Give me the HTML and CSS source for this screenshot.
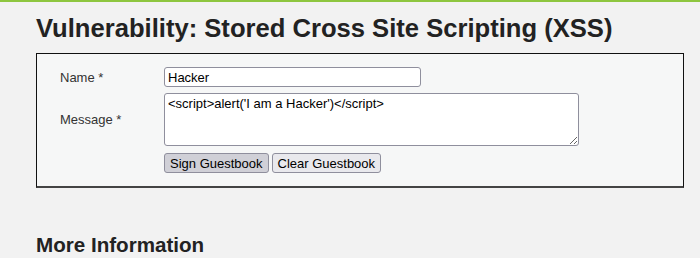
FILE: index.html
```html
<!DOCTYPE html>
<html>
<head>
  <title>Stored XSS</title>
  <link rel="stylesheet" href="styles.css">
</head>
<body>
  <div class="main">
    <h1>Vulnerability: Stored Cross Site Scripting (XSS)</h1>

    <div class="vulnerable-area">
      <form class="guestbook">
        <label for="txtName">Name *</label>
        <input type="text" id="txtName" value="Hacker">

        <label for="mtxMessage">Message *</label>
        <textarea id="mtxMessage">&lt;script&gt;alert('I am a Hacker')&lt;/script&gt;</textarea>

        <span></span>
        <div class="buttons">
          <button type="button" class="active">Sign Guestbook</button>
          <button type="button">Clear Guestbook</button>
        </div>
      </form>
    </div>

    <h2>More Information</h2>
  </div>
</body>
</html>
```

FILE: styles.css
```css
body {
  font-family: "Liberation Sans", Arial, sans-serif;
  background-color: #f2f2f2;
  color: #222;
  margin: 0;
  border-top: 2px solid #8ec63f;
}

.main {
  padding: 0 16px 0 36px;
}

h1 {
  font-size: 25.6px;
  font-weight: bold;
  line-height: 30px;
  margin: 11px 0 10px;
  color: #222;
}

h2 {
  font-size: 20.6px;
  font-weight: bold;
  line-height: 23px;
  margin: 45px 0 0;
  color: #222;
}

.vulnerable-area {
  background-color: #f6f7f7;
  border: 1px solid #111;
  border-bottom: 2px solid #444;
  padding: 13px 23px 13px;
}

.guestbook {
  display: grid;
  grid-template-columns: 104px auto;
  row-gap: 6px;
  align-items: center;
  justify-items: start;
  font-size: 13px;
  color: #333;
}

input[type="text"],
textarea {
  font-family: "Liberation Sans", Arial, sans-serif;
  font-size: 13px;
  color: #000;
  background-color: #fff;
  border: 1px solid #8f8f9d;
  border-radius: 3px;
  padding: 1px 3px;
  box-sizing: border-box;
  margin: 0;
}

input[type="text"] {
  width: 257px;
  height: 20px;
}

textarea {
  width: 415px;
  height: 53px;
  padding: 2px 3px;
}

.buttons {
  display: flex;
  gap: 3px;
  margin-top: 1px;
}

button {
  font-family: "Liberation Sans", Arial, sans-serif;
  font-size: 13px;
  color: #000;
  background-color: #e9e9ed;
  border: 1px solid #8f8f9d;
  border-radius: 3px;
  padding: 1px 5px;
  height: 20px;
}

button.active {
  background-color: #d0d0d7;
}
```
